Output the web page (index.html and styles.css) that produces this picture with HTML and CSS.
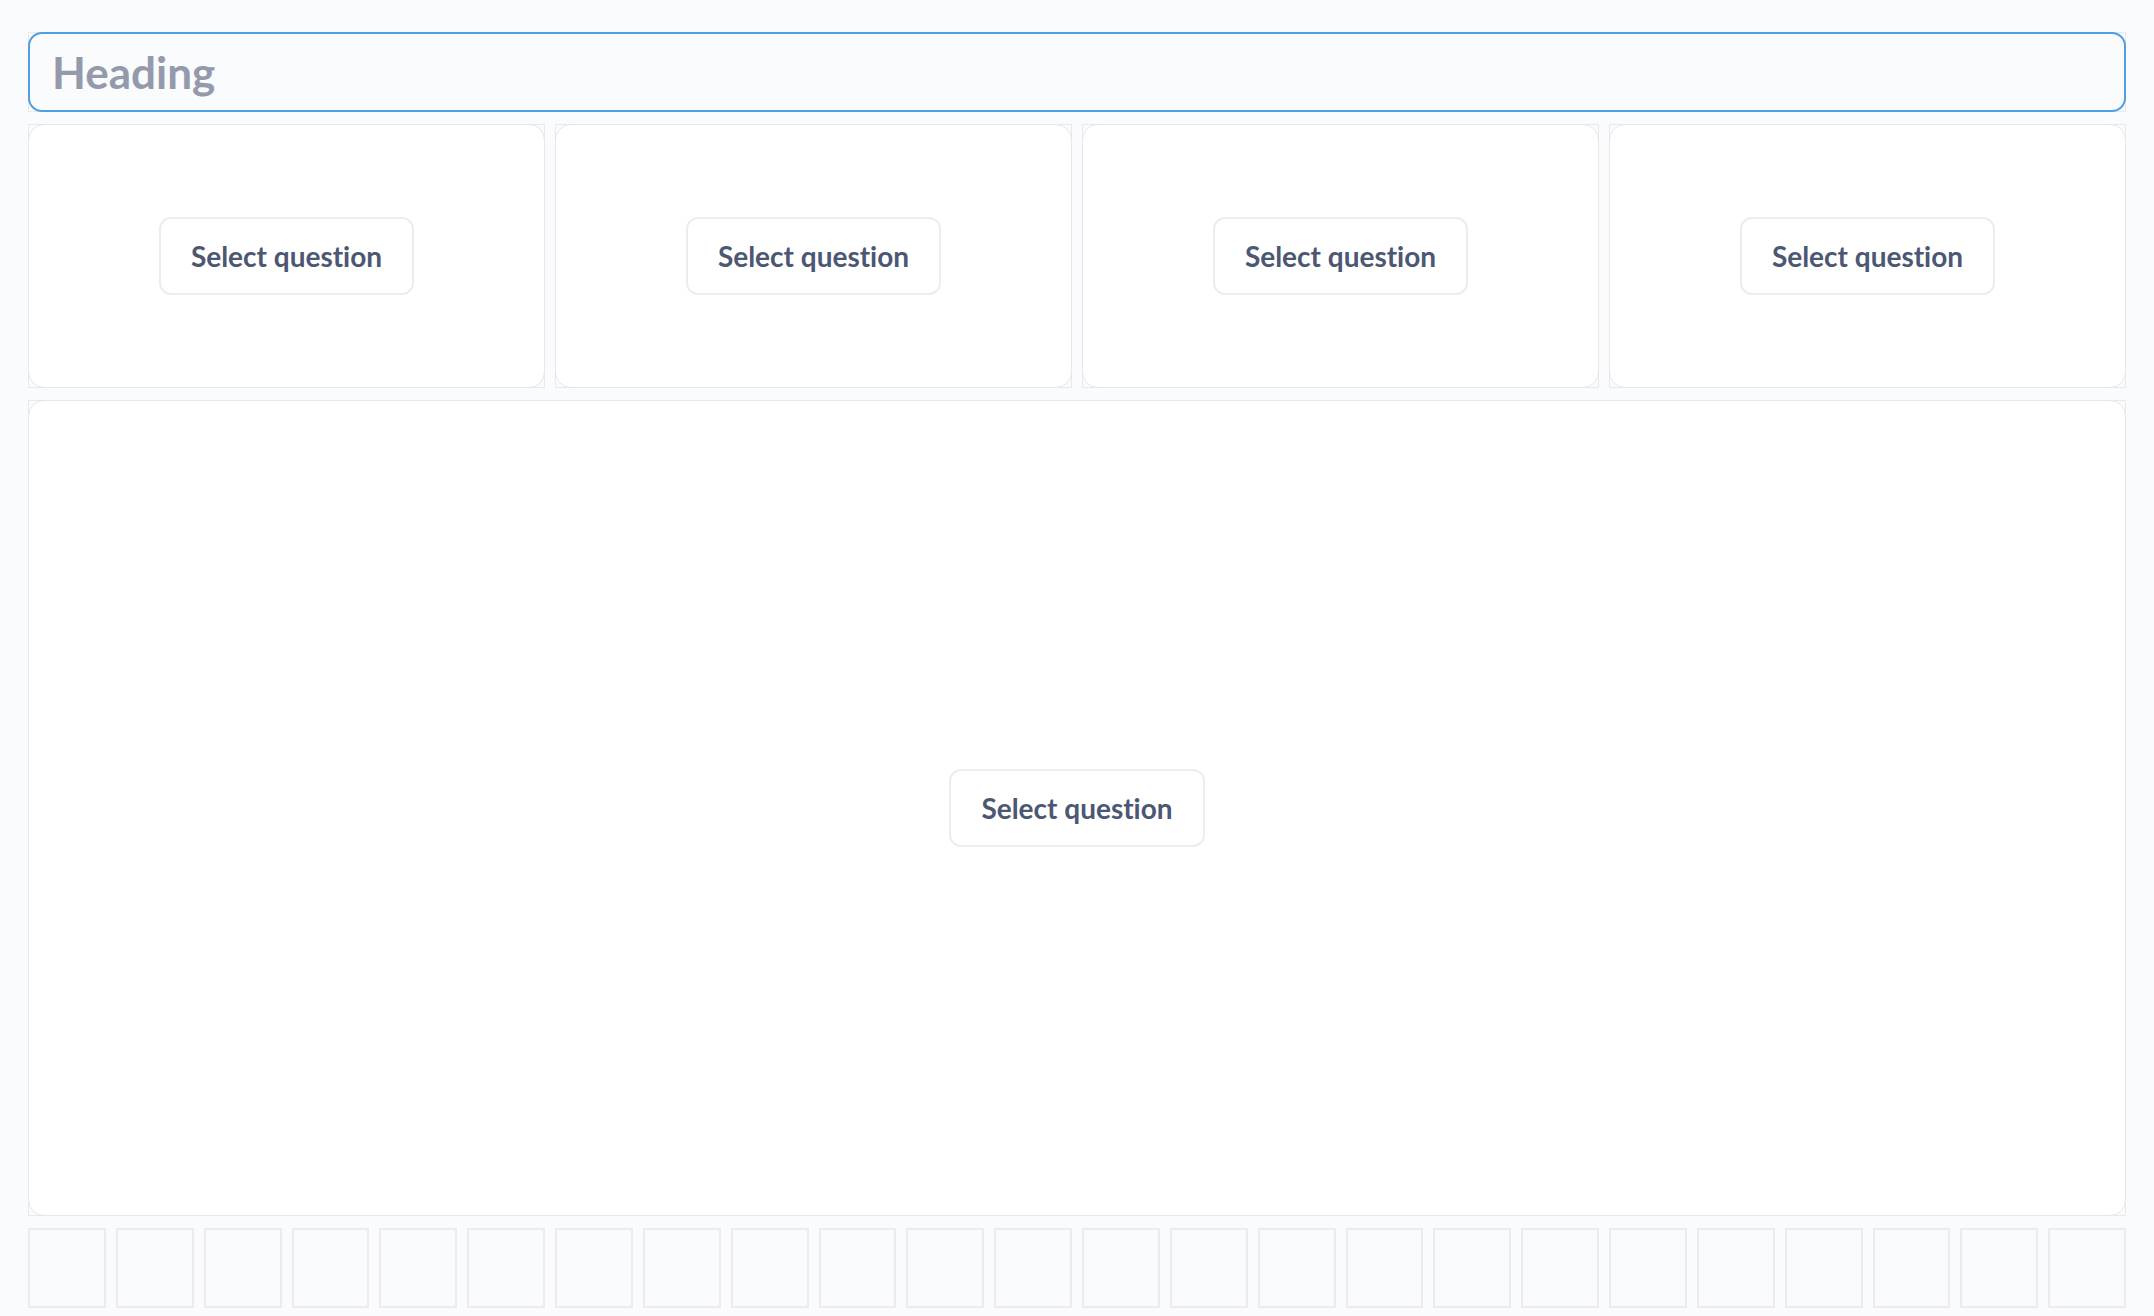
FILE: index.html
```html
<!DOCTYPE html>
<html lang="en">
<head>
    <meta charset="UTF-8">
    <meta name="viewport" content="width=device-width, initial-scale=1.0">
    <title>Dashboard</title>
    <link rel="stylesheet" href="styles.css">
</head>
<body>
    <div class="dashboard">
        <!-- 标题卡片 -->
        <div class="dash-item heading-item">
            <div class="heading-card">Heading</div>
        </div>

        <!-- 第一行：四个小卡片 -->
        <div class="dash-item small-item">
            <div class="card"><button class="select-btn">Select question</button></div>
        </div>
        <div class="dash-item small-item">
            <div class="card"><button class="select-btn">Select question</button></div>
        </div>
        <div class="dash-item small-item">
            <div class="card"><button class="select-btn">Select question</button></div>
        </div>
        <div class="dash-item small-item">
            <div class="card"><button class="select-btn">Select question</button></div>
        </div>

        <!-- 大卡片 -->
        <div class="dash-item big-item">
            <div class="card"><button class="select-btn">Select question</button></div>
        </div>

        <!-- 空白网格行 -->
        <div class="cell"></div><div class="cell"></div><div class="cell"></div><div class="cell"></div>
        <div class="cell"></div><div class="cell"></div><div class="cell"></div><div class="cell"></div>
        <div class="cell"></div><div class="cell"></div><div class="cell"></div><div class="cell"></div>
        <div class="cell"></div><div class="cell"></div><div class="cell"></div><div class="cell"></div>
        <div class="cell"></div><div class="cell"></div><div class="cell"></div><div class="cell"></div>
        <div class="cell"></div><div class="cell"></div><div class="cell"></div><div class="cell"></div>
    </div>
</body>
</html>
```

FILE: styles.css
```css
body {
    font-family: Lato, "Open Sans", sans-serif;
    font-variant-ligatures: none;
    margin: 0;
    padding: 32px 28px 0;
    background-color: #f9fbfc;
}

/* 24 列网格 */
.dashboard {
    display: grid;
    grid-template-columns: repeat(24, 1fr);
    grid-auto-rows: 80px;
    column-gap: 10px;
    row-gap: 12px;
}

/* 网格占位方框 */
.dash-item {
    box-shadow: inset 0 0 0 1px #e9e8ea;
    display: flex;
}

.heading-item {
    grid-column: span 24;
}

.small-item {
    grid-column: span 6;
    grid-row: span 3;
}

.big-item {
    grid-column: span 24;
    grid-row: span 9;
}

/* 标题 */
.heading-card {
    flex: 1;
    display: flex;
    align-items: center;
    padding: 0 22px;
    border: 2px solid #509ee3;
    border-radius: 14px;
    background-color: #f9fbfc;
    color: #949aab;
    font-size: 44px;
    font-weight: 700;
}

/* 卡片 */
.card {
    flex: 1;
    display: flex;
    align-items: center;
    justify-content: center;
    background-color: #fff;
    border: 1px solid #e8e6e8;
    border-radius: 16px;
}

.select-btn {
    font-family: Lato, "Open Sans", sans-serif;
    font-variant-ligatures: none;
    font-size: 28px;
    font-weight: 700;
    line-height: 34px;
    color: #4c5773;
    background-color: #fff;
    border: 2px solid #eeecec;
    border-radius: 12px;
    padding: 20px 30px;
    cursor: pointer;
}

/* 空白格子 */
.cell {
    border: 2px solid #eeebed;
    background-color: #f9fbfc;
}
```
